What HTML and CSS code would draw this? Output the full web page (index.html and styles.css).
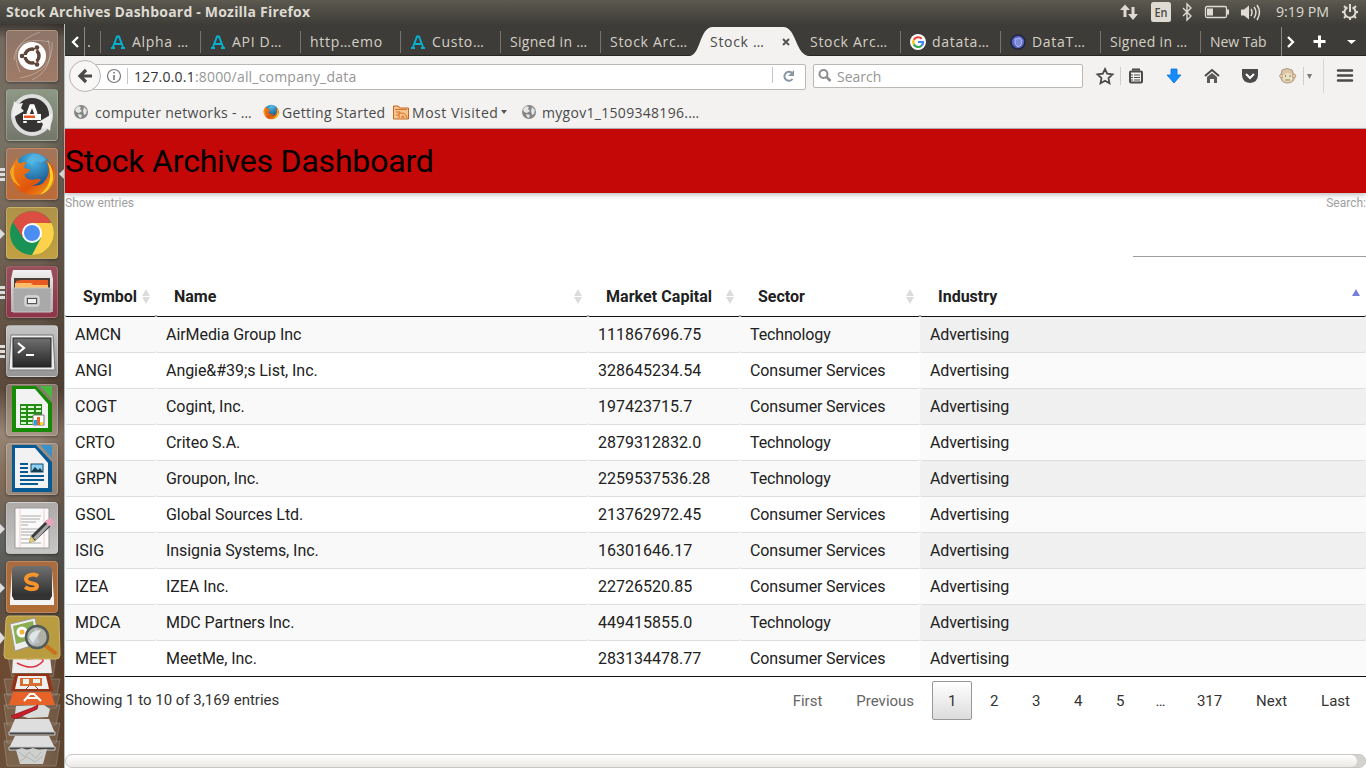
FILE: index.html
```html
<!DOCTYPE html>
<html lang="en">
<head>
<meta charset="utf-8">
<title>Stock Archives Dashboard</title>
<link rel="stylesheet" href="styles.css">
</head>
<body>
<svg class="defs" width="0" height="0">
  <defs>
    <linearGradient id="silver" x1="0" y1="0" x2="0" y2="1"><stop offset="0" stop-color="#f2f2f2"/><stop offset="1" stop-color="#a9a9a9"/></linearGradient>
    <linearGradient id="dark" x1="0" y1="0" x2="0" y2="1"><stop offset="0" stop-color="#707070"/><stop offset="1" stop-color="#262626"/></linearGradient>
    <linearGradient id="fox" x1="0" y1="0" x2="1" y2="1"><stop offset="0" stop-color="#f08a1c"/><stop offset=".6" stop-color="#e0540d"/><stop offset="1" stop-color="#f7a81b"/></linearGradient>
    <radialGradient id="earth" cx=".5" cy=".2" r=".8"><stop offset="0" stop-color="#4cb9e8"/><stop offset="1" stop-color="#0c3f7c"/></radialGradient>
    <symbol id="alpha" viewBox="0 0 16 16"><path d="M1 14h4M11 14h4M3 13 7 2.500h2l4 10.500M5 10h6" fill="none" stroke="#08b0cf" stroke-width="2"/></symbol>
    <symbol id="globe" viewBox="0 0 16 16"><circle cx="8" cy="8" r="7" fill="#858585"/><path d="M2 5 5 2l3 1-1 2 2 2-3 2-3-1zM11 3l3 3-1 4-2 1-1-4zM5 10l4 1-1 3-2-1z" fill="#e5e5e5"/></symbol>
    <symbol id="firefox" viewBox="0 0 48 48">
      <circle cx="25" cy="22" r="20" fill="url(#earth)"/>
      <path d="M24 3q9-1 15 6l-5 3-7-2-3 5-6-4z" fill="#5ab7e4" opacity=".7"/>
      <path d="M9 6q-1 4 2 7 4-2 8-1-4 2-3 6l6 1q-1 4-6 5 2 7 10 6 5-2 7 0-3 5-9 6 13 2 17-12 2-9-4-15 13 6 11 19-3 17-22 18Q8 46 3 29 0 17 7 10z" fill="url(#fox)"/>
      <path d="M40 11q7 8 6 19-4 13-14 16 10-8 11-20 0-8-3-15z" fill="#fbd12c"/>
      <path d="M6 14q-4 15 7 23-10-3-12-14 0-5 5-9z" fill="#f6a51e"/>
    </symbol>
  </defs>
</svg>

<header class="panel">
  <span class="panel-title">Stock Archives Dashboard - Mozilla Firefox</span>
  <svg class="panel-icons" width="246" height="24" viewBox="1120 0 246 24" fill="none" stroke="#dfdbd2">
    <g fill="#dfdbd2" stroke="none">
      <path d="M1120 10l5-5.500 5 5.500h-3.500v7h-3v-7zM1128 14l5 6 5-6h-3.500V7h-3v7z"/>
      <rect x="1151" y="2" width="20" height="20" rx="2.500"/>
      <path d="M1207 8.500h6v7h-6zM1227 9.500h2v5h-2zM1241 9.500h3l5-4v14l-5-4h-3z"/>
      <text class="lang" x="1154.500" y="17" textLength="13" lengthAdjust="spacingAndGlyphs">En</text>
      <text class="clock" x="1276" y="17" textLength="53" lengthAdjust="spacingAndGlyphs">9:19 PM</text>
    </g>
    <path d="M1183 8l8 8-4 4V4l4 4-8 8" stroke-width="1.400"/>
    <rect x="1205.500" y="6.500" width="21" height="11" rx="1.500" stroke-width="1.300"/>
    <path d="M1251 9q2 3 0 7M1254 7q4 5 0 11M1257 5q5 7 0 15" stroke-width="1.500"/>
    <path d="M1347.500 7.300a5.500 5.500 0 1 0 5 0" stroke-width="2"/>
    <path d="M1350 4v8" stroke-width="2"/>
    <path d="M1342 12h3M1355 12h3M1344 6l2 2M1356 6l-2 2M1344 18l2-2M1356 18l-2-2M1350 17v3" stroke-width="2"/>
  </svg>
</header>

<div class="desktop">
<nav class="launcher">
  <div class="tile dash"><svg viewBox="0 0 52 52"><path d="M8 30Q9 5 44 12M14 42Q0 14 34 2M46 12Q48 42 14 48M26 50Q50 38 42 10" fill="none" stroke="#fff" stroke-opacity=".3"/><circle cx="26" cy="26" r="14" fill="#fff"/><circle cx="26" cy="26" r="7" fill="none" stroke="#5f463a" stroke-width="3.500"/><path d="M26 26H12M26 26l7-12M26 26l7 12" stroke="#fff" stroke-width="2"/><circle cx="26" cy="26" r="5" fill="#fff"/><g fill="#5f463a"><circle cx="16" cy="26" r="2.300"/><circle cx="31" cy="17.500" r="2.300"/><circle cx="31" cy="34.500" r="2.300"/></g></svg></div>
  <div class="tile updater"><svg viewBox="0 0 52 52"><circle cx="26" cy="26" r="19" fill="#353432" stroke="#dedede" stroke-width="4"/><path d="M6 29l2-17 3 3 6-1-2 5 3 3zM46 25l-2 17-3-3-6 1 2-5-3-3z" fill="#eee"/><path d="M22 25l3-8h2l3 8M19 32v2M33 32v2" fill="none" stroke="#fff" stroke-width="3.500"/><rect x="17" y="25" width="18" height="6" fill="#fff"/><rect x="18" y="26.500" width="11" height="2.500" fill="#e95420"/></svg></div>
  <div class="tile ff running three focused"><svg viewBox="0 0 52 52"><use href="#firefox" x="3" y="3" width="46" height="46"/></svg></div>
  <div class="tile chrome running"><svg viewBox="0 0 52 52"><circle cx="26" cy="26" r="22" fill="#189255"/><path d="M7 15A22 22 0 0 1 45.500 16H26l-9 15z" fill="#dd4e42"/><path d="M26 16h19.500A22 22 0 0 1 26 48l9-17z" fill="#fdd149"/><circle cx="26" cy="26" r="10" fill="#fff"/><circle cx="26" cy="26" r="8" fill="#4b8df2"/></svg></div>
  <div class="tile files running three"><svg viewBox="0 0 52 52"><path d="M7 4h38l2 9v33H5V13z" fill="url(#silver)"/><path d="M8 12h36v11H8z" fill="#493e38"/><path d="M10 15l5-1h27v9H10z" fill="#e75b22"/><path d="M9 17h16l2 2h15v5H9z" fill="#ffbd67"/><path d="M7 22h38v24H7z" fill="#a9a9a9" stroke="#c7c7c7"/><rect x="19" y="30" width="14" height="10" rx="2" fill="#bdbdbd" stroke="#eee"/><rect x="21.500" y="32.500" width="9" height="5" fill="#f0f0f0" stroke="#555"/></svg></div>
  <div class="tile terminal running three"><svg viewBox="0 0 52 52"><path d="M5 10h42l2 35H3z" fill="#ededed" stroke="#777"/><rect x="7" y="13" width="38" height="29" fill="url(#dark)" stroke="#222"/><path d="M12 18l6 5-6 5" fill="none" stroke="#fff" stroke-width="2.200"/><path d="M20 30h8" stroke="#fff" stroke-width="2"/></svg></div>
  <div class="tile office"><svg viewBox="0 0 52 52"><path d="M6 2h24l16 17v29H6z" fill="#168a05"/><path d="M10 5h19l13 15v24H10z" fill="#f2f2f2"/><path d="M34 2h12v13z" fill="#48b640"/><rect x="14" y="20" width="22" height="21" fill="#238b16"/><path d="M15 22h5v2h-5zM22 22h6v2h-6zM30 22h5v2h-5zM15 26h5v2h-5zM22 26h6v2h-6zM30 26h5v2h-5zM15 30h5v2h-5zM22 30h6v2h-6zM15 34h5v2h-5zM22 34h6v2h-6zM15 38h5v2h-5zM22 38h6v2h-6z" fill="#d9ffd0"/><path d="M27 31h11v10H27z" fill="#fff" stroke="#777"/><path d="M28 36h3v5h-3z" fill="#17a3f4"/><path d="M31 33h3v8h-3z" fill="#ef6322"/><path d="M34 38h3v3h-3z" fill="#ffd42c"/></svg></div>
  <div class="tile office"><svg viewBox="0 0 52 52"><path d="M6 2h24l16 17v30H6z" fill="#075a93"/><path d="M9 5h20l13 15v25H9z" fill="#f2f2f2"/><path d="M34 2h12v13z" fill="#3e91c6"/><path d="M14 21h8M14 25h8M14 29h8M14 33h24M14 37h24M14 41h18" stroke="#075a93" stroke-width="2"/><rect x="25" y="21" width="12" height="8" fill="#8bd0f5" stroke="#154663"/><path d="M25 29l4-5 3 3 2-2 3 4z" fill="#173d53"/></svg></div>
  <div class="tile editor running"><svg viewBox="0 0 52 52"><path d="M9 6h34v40H9z" fill="#fafafa" stroke="#999"/><path d="M14 6v40M38 6v40" stroke="#f0b2b2" stroke-width=".7"/><path d="M15 14h20M15 17h19M15 20h15M15 23h7M15 27h20M15 30h17M15 33h18M15 37h14M15 41h20" stroke="#aaa"/><path d="M23 41l2-7 16-16 5 5-17 16z" fill="#3c3c3c"/><path d="M27 36l15-15 2 2-14 15z" fill="#aaa"/><path d="M23 41l2-7 4 5z" fill="#e1cf72"/><path d="M39 20l4-4q4 0 5 5l-3 4z" fill="#e9a3bd"/></svg></div>
  <div class="tile sublime running"><svg viewBox="0 0 52 52"><path d="M4 39l2-30 4-4h32l4 4 2 30v5H4z" fill="#f4f4f4"/><path d="M6 35V8l3-3h34l3 3v27l-3 4H9z" fill="url(#dark)"/><path d="M6 34h40l-2 5H8z" fill="#333"/><path d="M32 15c-4-3-12-1-12 3 0 6 11 3 11 7 0 4-8 4-12 1" fill="none" stroke="#f9942c" stroke-width="4"/></svg></div>
  <svg class="stack" width="65" height="155" viewBox="0 613 65 155">
    <path d="M8 657h48l-3 20H12zM4 679h56l-3 16H7zM4 694h56l-4 14H7zM4 705h56l-4 20H7zM4 723h56l-4 20H7zM4 741h56l-4 25H7z" fill="#d7d2c5" fill-opacity=".15" stroke="#ddd" stroke-opacity=".25"/>
    <path d="M13 657h37l2 16H12z" fill="#eee"/><path d="M17 663q17 9 26-2 2-4-16-2" fill="none" stroke="#da3446" stroke-width="1.500"/>
    <path d="M15 674h34l4 17H11z" fill="#963116"/><path d="M18 676h28l3 13H15z" fill="#eee"/><path d="M20 678h22v8H20z" fill="#d96a31"/><path d="M23 679h6v5h-6zM33 679h7v4h-7z" fill="#e4f4ea"/><path d="M25 690l4-4M39 690l-4-4" stroke="#87402e"/>
    <path d="M13 692h38l4 13H9z" fill="#e76228"/><path d="M24 701l6-7h4l7 7M26 698h12" fill="none" stroke="#fff" stroke-width="2"/>
    <path d="M16 706l28-1 6 4-2 8-20 1-13-4z" fill="#d9dada"/><path d="M11 716l21-8 6-3-1 4-22 10z" fill="#c82029" stroke="#9c1a22"/>
    <path d="M15 719h34l6 14H9zM15 736h34l6 12H9z" fill="#dedede"/><path d="M9 732h46v3H9zM9 747h46v3H9z" fill="#444" stroke="#ccc"/>
    <path d="M16 750l6-2 5 2 6-2 6 2 8-1-4 15H20z" fill="#cdd0cd"/><path d="M19 752l6 5 4-5 7 6 5-6M20 761l7-4 8 5 8-6" fill="none" stroke="#b2b5b2"/>
    <path d="M9 616h46q4 0 4 4l1 35q0 4-4 4H8q-4 0-4-4l2-35q0-4 3-4z" fill="#b99b40" stroke="#cbb56e"/>
    <path d="M10 624l25-6 5 25-25 8z" fill="#efefef" stroke="#999"/><path d="M13 626l20-5 3 17-20 6z" fill="#8bad53"/><circle cx="22" cy="632" r="4" fill="#f6b437" stroke="#fff" stroke-width="3"/>
    <path d="M46 646l9 7" stroke="#ca701e" stroke-width="4" stroke-linecap="round"/><circle cx="37" cy="637" r="11" fill="#aeb7bc" fill-opacity=".8" stroke="#515a5d" stroke-width="2.500"/><path d="M29 638q2-8 12-8l-8 13z" fill="#e0e5e5"/>
    <path d="M0 632l5 6-5 6z" fill="#ddd"/>
  </svg>
</nav>

<main class="browser">
  <div class="tabs">
    <div class="scroll-left"><svg width="35" height="32" viewBox="65 24 35 32"><path d="M78 37l-5 5 5 5" fill="none" stroke="#fff" stroke-width="2.300"/><path d="M84.500 27v29" stroke="#8b8982"/><path d="M88 45h2v2h-2z" fill="#aaa79f"/></svg></div>
    <div class="tab"><svg class="fav"><use href="#alpha"/></svg><span class="wide">Alpha …</span></div>
    <div class="tab"><svg class="fav"><use href="#alpha"/></svg><span class="wide">API D…</span></div>
    <div class="tab"><span class="wide">http…emo</span></div>
    <div class="tab"><svg class="fav"><use href="#alpha"/></svg><span class="wide">Custo…</span></div>
    <div class="tab"><span class="signed">Signed in …</span></div>
    <div class="tab"><span class="wide">Stock Arc…</span></div>
    <div class="tab active"><svg class="tab-shape" width="124" height="29" viewBox="0 0 124 29"><path d="M0 29C12 29 10 0 24 0H94C108 0 106 29 121 29z" fill="#f3f2f1"/></svg><span class="wide">Stock …</span><svg class="close" width="8" height="8" viewBox="0 0 8 8"><path d="M1 1l6 6M7 1L1 7" stroke="#555" stroke-width="2"/></svg></div>
    <div class="tab plain"><span class="wide">Stock Arc…</span></div>
    <div class="tab"><svg class="fav" viewBox="0 0 16 16"><circle cx="8" cy="8" r="8" fill="#fff"/><g fill="none" stroke-width="2.200"><path d="M3.800 5.800A5 5 0 0 1 11.700 4.700" stroke="#ea4335"/><path d="M3.800 5.800a5 5 0 0 0 0 4.600" stroke="#fbbc05"/><path d="M3.800 10.400a5 5 0 0 0 7.600 1.400" stroke="#34a853"/><path d="M11.400 11.800A5 5 0 0 0 13 8H8" stroke="#4285f4"/></g></svg><span class="wide">datata…</span></div>
    <div class="tab"><svg class="fav" viewBox="0 0 16 16"><circle cx="8" cy="8" r="7" fill="#5965c5" stroke="#20233e" stroke-width="1.500"/><path d="M5 5l5-1 2 3-1 4-3 2-3-3z" fill="#7e8ad9" stroke="#b3bdf0"/></svg><span class="wide">DataT…</span></div>
    <div class="tab"><span class="signed">Signed in …</span></div>
    <div class="tab newtab"><span>New Tab</span></div>
    <svg class="tab-tools" width="86" height="32" viewBox="1280 24 86 32" fill="none" stroke="#fff"><path d="M1281.500 27v29" stroke="#8b8982"/><path d="M1288 37l5 5-5 5" stroke-width="2.300"/><path d="M1319.500 35.500v12M1313.500 41.500h12" stroke-width="3"/><path d="M1347 40h9l-4.500 4z" fill="#fff" stroke="none"/></svg>
  </div>

  <div class="toolbar">
    <div class="address"><svg width="65" height="36" viewBox="68 58 65 36"><circle cx="85" cy="76" r="15.500" fill="#f8f7f6" stroke="#b9b6b2"/><path d="M92 76H81M86 70l-6 6 6 6" fill="none" stroke="#4a4a4a" stroke-width="3.200"/><circle cx="114" cy="76" r="6.500" fill="none" stroke="#777" stroke-width="1.200"/><path d="M114 75v5M114 72v1.500" stroke="#777" stroke-width="1.600"/><path d="M127.500 68v16" stroke="#c5c5c5"/></svg>
      <span class="url"><b>127.0.0.1</b>:8000/all_company_data</span>
      <svg class="reload" width="34" height="24" viewBox="772 65 34 24"><path d="M772.500 68v16" stroke="#c5c5c5"/><path d="M792 74a4.500 4.500 0 1 0 .5 6" fill="none" stroke="#8998a4" stroke-width="2"/><path d="M794 71v6h-6z" fill="#8998a4"/></svg>
    </div>
    <div class="searchbox"><svg width="18" height="18" viewBox="0 0 18 18" fill="none" stroke="#8d8d8d"><circle cx="6.500" cy="7" r="4" stroke-width="2"/><path d="M9.500 10l4 4" stroke-width="2.500"/></svg><span>Search</span></div>
    <svg class="tools" width="276" height="40" viewBox="1090 56 276 40" fill="none" stroke="#4a4a4a">
      <path d="M1105 69l2.200 4.700 5.300.700-4 3.700 1 5.200-4.500-2.600-4.500 2.600 1-5.200-4-3.700 5.300-.700z" stroke-width="1.800"/>
      <path d="M1120.500 67v18M1303.500 67v18" stroke="#cfcdca"/><path d="M1323.500 59v34" stroke="#d7d4d1"/>
      <rect x="1130" y="71.500" width="12" height="11" rx="1" stroke-width="2"/><path d="M1133 70.500v-1h6v1" stroke-width="2"/><path d="M1134 75h6M1134 77.500h6M1134 80h6M1131 75h2M1131 77.500h2M1131 80h2" stroke-width="1.200"/>
      <path d="M1171 69h6v6h4l-7 8-7-8h4z" fill="#168bfa" stroke="#0875dc" stroke-width=".8"/>
      <path d="M1205 76l7-6 7 6" stroke-width="2"/><path d="M1207 77l5-4 5 4v6h-3v-4h-4v4h-3z" fill="#5a5a5a" stroke="none"/>
      <path d="M1242 69h16v6q0 7-8 8-8-1-8-8z" fill="#4a4a4a" stroke="none"/><path d="M1246 74l4 4 4-4" stroke="#fff" stroke-width="2"/>
      <path d="M1282 70q5-3 10 0l2 5q2 7-6 8-8 0-7-8z" fill="#dac5a6" stroke="#b2977b"/><circle cx="1281.500" cy="76" r="1.800" fill="#ecd2b4" stroke="#b99c82"/><circle cx="1294" cy="76" r="1.800" fill="#ecd2b4" stroke="#b99c82"/><path d="M1283 75q5-4 9 0v5q-4 4-9 0z" fill="#f1dfc1" stroke="none"/><path d="M1285.500 75v2M1290 75v2M1285 80h5" stroke="#778c65"/>
      <path d="M1307 74h5l-2.500 5z" fill="#777" stroke="none"/><path d="M1338 70.500h14M1338 75.500h14M1338 80.500h14" stroke-width="2.500" stroke-linecap="round"/>
    </svg>
  </div>

  <div class="bookmarks">
    <div class="bookmark b1"><svg><use href="#globe"/></svg><span>computer networks - …</span></div>
    <div class="bookmark b2"><svg><use href="#firefox"/></svg><span>Getting Started</span></div>
    <div class="bookmark b3"><svg viewBox="0 0 16 16"><path d="M.5 2h5l1 2h9v11H.5z" fill="#f5c58f" stroke="#c8681e"/><path d="M2 5.500h12M3 8h4M3 11h3" stroke="#d8752b"/><path d="M6 14V9h2q5 0 6 5M9 14v-2q2 0 2 2" fill="none" stroke="#df6b16"/></svg><span>Most Visited</span><i></i></div>
    <div class="bookmark b4"><svg><use href="#globe"/></svg><span>mygov1_1509348196.…</span></div>
  </div>

  <section class="page">
    <h1>Stock Archives Dashboard</h1>
    <div class="filters"><label>Show entries</label><label class="search-label">Search:<input type="search"></label></div>
    <table>
      <colgroup><col class="c1"><col class="c2"><col class="c3"><col class="c4"><col class="c5"></colgroup>
      <thead><tr><th>Symbol</th><th>Name</th><th>Market Capital</th><th>Sector</th><th class="sorted">Industry</th></tr></thead>
      <tbody>
        <tr><td>AMCN</td><td>AirMedia Group Inc</td><td>111867696.75</td><td>Technology</td><td>Advertising</td></tr>
        <tr><td>ANGI</td><td>Angie&amp;#39;s List, Inc.</td><td>328645234.54</td><td>Consumer Services</td><td>Advertising</td></tr>
        <tr><td>COGT</td><td>Cogint, Inc.</td><td>197423715.7</td><td>Consumer Services</td><td>Advertising</td></tr>
        <tr><td>CRTO</td><td>Criteo S.A.</td><td>2879312832.0</td><td>Technology</td><td>Advertising</td></tr>
        <tr><td>GRPN</td><td>Groupon, Inc.</td><td>2259537536.28</td><td>Technology</td><td>Advertising</td></tr>
        <tr><td>GSOL</td><td>Global Sources Ltd.</td><td>213762972.45</td><td>Consumer Services</td><td>Advertising</td></tr>
        <tr><td>ISIG</td><td>Insignia Systems, Inc.</td><td>16301646.17</td><td>Consumer Services</td><td>Advertising</td></tr>
        <tr><td>IZEA</td><td>IZEA Inc.</td><td>22726520.85</td><td>Consumer Services</td><td>Advertising</td></tr>
        <tr><td>MDCA</td><td>MDC Partners Inc.</td><td>449415855.0</td><td>Technology</td><td>Advertising</td></tr>
        <tr><td>MEET</td><td>MeetMe, Inc.</td><td>283134478.77</td><td>Consumer Services</td><td>Advertising</td></tr>
      </tbody>
    </table>
    <footer>
      <span class="info">Showing 1 to 10 of 3,169 entries</span>
      <div class="pager"><a class="off">First</a><a class="off">Previous</a><a class="num current">1</a><a class="num">2</a><a class="num">3</a><a class="num">4</a><a class="num">5</a><span>…</span><a class="last-num">317</a><a>Next</a><a>Last</a></div>
    </footer>
    <div class="scrollbar"><div class="thumb"></div></div>
  </section>
</main>
</div>
</body>
</html>
```
FILE: styles.css
```css
* { box-sizing: border-box; }
body { margin: 0; width: 1366px; height: 768px; overflow: hidden; font-family: "Open Sans", "Noto Sans", sans-serif; font-size: 14px; color: #4a4a4a; background: #fff; }
svg { flex: none; display: block; }
.defs { position: absolute; }
.panel { display: flex; justify-content: space-between; align-items: center; height: 24px; padding-left: 6px; color: #dfdbd2; background: linear-gradient(#5d5b50, #55534a 20%, #3e3d38); }
.panel-title { padding-bottom: 2px; font-weight: 700; font-size: 14px; letter-spacing: .2px; white-space: nowrap; }
.lang { font: 600 13px "Open Sans", sans-serif; fill: #4a4943; }
.clock { font: 14px "Open Sans", sans-serif; }
.desktop { display: flex; height: 744px; }

.launcher { position: relative; width: 65px; padding: 6px 0 0 6px; border-right: 1px solid #b4c2c4; background: linear-gradient(90deg, rgba(20,15,10,0) 60%, rgba(20,15,10,.22)), linear-gradient(#3d3833, #75695f 2%, #777264 15%, #786a5b 25%, #655648 38%, #5b4a3d 49%, #988575 55%, #806a58 62%, #5e6260 70%, #59534a 76%, #6d4a32 86%, #6c5038 100%); }
.tile { position: relative; width: 52px; height: 52px; margin-bottom: 7px; border: 1px solid rgba(255,255,255,.2); border-radius: 4px; box-shadow: 0 1px 3px rgba(0,0,0,.4); }
.tile svg { width: 52px; height: 52px; margin: -1px; }
.dash { background: linear-gradient(#8d7568, #a07a66); }
.updater { background: linear-gradient(#8d9885, #73776b); }
.ff { background: linear-gradient(#a1765c, #bd6b35); }
.chrome { background: linear-gradient(#ae9247, #c1a040); }
.files { background: linear-gradient(#97515b, #8d3548); }
.terminal { background: linear-gradient(#c5c5c5, #969696); }
.office { background: rgba(183,168,151,.5); }
.editor { background: linear-gradient(#adaaa8, #c6c6c5); }
.sublime { background: linear-gradient(#a86c40, #b06c35); }
.running::before { content: ""; position: absolute; left: -7px; top: 21px; border: 5px solid transparent; border-left-color: #ddd; border-right: 0; }
.three::before { top: 19px; width: 5px; height: 13px; border: 0; background: repeating-linear-gradient(#ddd 0 3px, transparent 3px 5px); }
.focused::after { content: ""; position: absolute; left: 52px; top: 20px; border: 5px solid transparent; border-right-color: #ddd; border-left: 0; }
.stack { position: absolute; left: 0; bottom: 0; }

.browser { display: flex; flex-direction: column; width: 1301px; background: #f3f2f1; }
.tabs { display: flex; height: 32px; background: #3d3c38; box-shadow: inset 0 -1px #272623; }
.scroll-left { width: 35px; }
.tab { position: relative; display: flex; align-items: center; gap: 6px; width: 100px; padding: 3px 0 0 10px; white-space: nowrap; color: #d5d0c6; }
.tab:not(.active):not(.plain)::before { content: ""; position: absolute; left: 0; top: 7px; width: 1px; height: 22px; background: #76746e; }
.tab span { position: relative; letter-spacing: .25px; }
.tab .wide { letter-spacing: .7px; }
.tab .signed { letter-spacing: .3px; }
.newtab span { letter-spacing: -.05px; }
.fav { width: 16px; height: 16px; }
.active { z-index: 1; color: #4a4a4a; }
.tab-shape { position: absolute; left: -11px; bottom: 0; }
.tab .close { position: absolute; left: 82px; top: 14px; }
.tab-tools { margin-left: -20px; }
.toolbar { display: flex; align-items: center; height: 40px; padding-left: 3px; }
.address { position: relative; display: flex; align-items: center; width: 738px; height: 36px; }
.address::before { content: ""; position: absolute; left: 17px; top: 6px; width: 719px; height: 24px; border: 1px solid #bbb8b4; border-radius: 2px; background: #fff; }
.address > * { position: relative; }
.url { flex: 1; padding-left: 1px; color: #969696; letter-spacing: .2px; }
.url b { color: #333; font-weight: 400; }
.searchbox { display: flex; align-items: center; gap: 2px; width: 270px; height: 24px; margin-left: 7px; padding-left: 3px; border: 1px solid #bbb8b4; border-radius: 2px; background: #fff; color: #969696; }
.tools { margin-left: 7px; }
.bookmarks { display: flex; height: 33px; border-bottom: 1px solid #b4b5b7; }
.bookmark { display: flex; align-items: center; white-space: nowrap; letter-spacing: .3px; }
.bookmark svg { width: 16px; height: 16px; margin-right: 2px; }
.bookmark i { margin-left: 3px; border: 3px solid transparent; border-top: 4px solid #555; border-bottom: 0; }
.b1 { width: 190px; padding-left: 8px; }
.b1 svg { margin-right: 6px; }
.b2 { width: 138px; padding-left: 8px; }
.b2 svg, .b3 svg { margin-right: 3px; }
.b3 { width: 128px; letter-spacing: .55px; }
.b4 svg { margin-right: 5px; }

.page { display: flex; flex-direction: column; height: 639px; background: #fff; color: #212121; font-family: Roboto, sans-serif; }
h1 { z-index: 1; margin: 0; height: 64px; font-size: 32px; line-height: 64px; font-weight: 400; letter-spacing: -.2px; color: #000; background: #c40707; box-shadow: 0 2px 5px rgba(0,0,0,.25); }
.filters { display: flex; justify-content: space-between; height: 84px; padding-top: 2px; font-size: 12px; line-height: 16px; color: #9e9e9e; }
.search-label { display: flex; flex-direction: column; align-items: flex-end; }
.search-label input { width: 233px; height: 46px; border: 0; border-bottom: 1px solid #9e9e9e; outline: 0; background: transparent; }
table { width: 1301px; table-layout: fixed; border-collapse: separate; border-spacing: 0; font-size: 16px; }
.c1 { width: 91px; } .c2 { width: 432px; } .c3 { width: 152px; } .c4 { width: 180px; } .c5 { width: 446px; }
th { position: relative; height: 40px; padding: 0 18px; text-align: left; font-weight: 700; white-space: nowrap; border-bottom: 1px solid #111; border-radius: 2px; }
td { height: 36px; padding: 0 10px; line-height: 20px; border-bottom: 1px solid #ddd; border-radius: 2px; }
td:nth-child(2) { letter-spacing: -.06px; }
td:nth-child(4) { letter-spacing: -.14px; }
td:nth-child(5) { letter-spacing: -.13px; }
th:nth-child(3) { letter-spacing: .06px; }
tbody tr:nth-child(odd) { background: #f9f9f9; }
td:last-child { background: #fafafa; }
tbody tr:nth-child(odd) td:last-child { background: #f0f0f0; }
tbody tr:last-child td { border-bottom-color: #111; border-radius: 0; }
th::before, th::after { content: ""; position: absolute; right: 6px; border: 4px solid transparent; }
th::before { top: 12px; border-top: 0; border-bottom: 7px solid #dcdcdc; }
th::after { top: 20px; border-bottom: 0; border-top: 7px solid #dcdcdc; }
th.sorted::before { border-bottom-color: #7880df; }
th.sorted::after { display: none; }
footer { display: flex; justify-content: space-between; height: 77px; padding-top: 4px; font-size: 15px; }
.info { padding-top: 10px; line-height: 18px; color: #333; }
.pager { display: flex; gap: 2px; }
.pager a, .pager > span { height: 39px; padding: 0 15px; border: 1px solid transparent; border-radius: 2px; line-height: 38px; color: #333; }
.pager > span { width: 37px; padding: 0; text-align: center; }
.pager .num { width: 40px; padding: 0; text-align: center; }
.pager .last-num { width: 57px; padding: 0; text-align: center; }
.pager .off { color: #666; }
.pager .current { border-color: #979797; background: linear-gradient(#fff, #dcdcdc); }
.scrollbar { height: 14px; border: 1px solid #c8c6c2; border-radius: 7px; background: #d4d2cf; }
.thumb { width: 1291px; height: 12px; border-radius: 6px; background: linear-gradient(#fff, #ebe9e6); }
```
